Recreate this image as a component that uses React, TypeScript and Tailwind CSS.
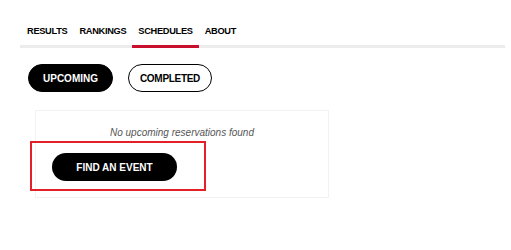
import { useState } from "react";

const tabs = ["RESULTS", "RANKINGS", "SCHEDULES", "ABOUT"];

const App = () => {
  const [active, setActive] = useState("SCHEDULES");
  const [view, setView] = useState<"upcoming" | "completed">("upcoming");

  return (
    <div className="min-h-[250px] bg-white pl-5 pr-[6px] font-['Liberation_Sans',Arial,sans-serif] text-black">
      {/* tab nav */}
      <nav className="flex border-b-[3px] border-[#ececec] pt-[25px] pl-px">
        {tabs.map((tab) => (
          <button
            key={tab}
            onClick={() => setActive(tab)}
            className={`-mb-[3px] border-b-[3px] px-[6px] pb-[8px] text-[9.25px] font-bold leading-[12px] tracking-[-0.3px] ${
              active === tab ? "border-[#c8102e]" : "border-transparent"
            }`}
          >
            {tab}
          </button>
        ))}
      </nav>

      {/* upcoming / completed toggle */}
      <div className="mt-4 ml-2 flex gap-[15px]">
        <button
          onClick={() => setView("upcoming")}
          className={`h-[28px] w-[85px] rounded-full border text-[10px] font-bold ${
            view === "upcoming" ? "border-black bg-black text-white" : "border-black bg-white"
          }`}
        >
          UPCOMING
        </button>
        <button
          onClick={() => setView("completed")}
          className={`h-[28px] w-[84px] rounded-full border text-[10px] font-bold tracking-[-0.3px] ${
            view === "completed" ? "border-black bg-black text-white" : "border-black bg-white"
          }`}
        >
          COMPLETED
        </button>
      </div>

      {/* results card */}
      <div className="relative mt-[18px] ml-[15px] w-[294px] border border-[#f2f2f2] px-4 pt-[15px] pb-4">
        <p className="text-center text-[10px] italic leading-[14px] text-[#555]">
          No {view} reservations found
        </p>
        <button className="mt-[13px] h-[28px] w-[125px] rounded-full bg-black text-[10px] font-bold text-white">
          FIND AN EVENT
        </button>
        <div className="pointer-events-none absolute top-[30px] -left-[6px] h-[50px] w-[176px] border-2 border-[#e32027]" />
      </div>
    </div>
  );
};

export default App;
